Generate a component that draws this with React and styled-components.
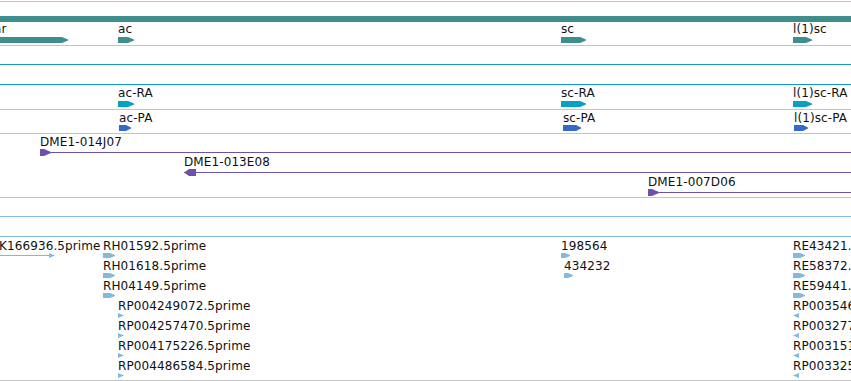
import React from "react";
import styled, { createGlobalStyle } from "styled-components";

const C = {
  grid: "#c4c4c4",
  teal: "#3f8e8e",
  cyan: "#0e9cbf",
  ra: "#05a0c2",
  pa: "#3468cd",
  purple: "#6e52a9",
  sky: "#86bde2",
  est: "#82b9e0",
  text: "#111111",
};

const GlobalStyle = createGlobalStyle`
  html, body { margin: 0; padding: 0; background: #ffffff; }
  body { font-family: "DejaVu Sans", Verdana, sans-serif; }
`;

const Browser = styled.div`
  width: 851px;
  height: 381px;
  overflow: hidden;
  padding-top: 1px;
  box-sizing: border-box;
  background: #ffffff;
`;

const TrackList = styled.div`
  display: flex;
  flex-direction: column;
  border-top: 1px solid ${C.grid};
`;

const Track = styled.div`
  position: relative;
  flex: none;
  height: ${(p) => p.$h}px;
  border-bottom: 1px solid ${(p) => p.$line};
  overflow: hidden;
`;

const SpanBar = styled.div`
  position: absolute;
  left: 0;
  right: 0;
  top: ${(p) => p.$top}px;
  height: ${(p) => p.$h}px;
  background: ${(p) => p.$color};
`;

const Feature = styled.div`
  position: absolute;
  left: ${(p) => p.$x}px;
  top: ${(p) => p.$y}px;
  display: flex;
  flex-direction: column;
  align-items: flex-start;
`;

const Label = styled.span`
  font-size: 12px;
  line-height: 14px;
  letter-spacing: 0.1px;
  color: ${C.text};
  white-space: nowrap;
`;

const Glyph = styled.svg`
  display: block;
  flex: none;
  margin-top: ${(p) => p.$gap}px;
`;

function Arrow({ w, h, color, head = 6, gap = 0 }) {
  const pts = `0,0 ${w - head},0 ${w},${h / 2 - 0.5} ${w},${h / 2 + 0.5} ${w - head},${h} 0,${h}`;
  return (
    <Glyph $gap={gap} width={w} height={h} viewBox={`0 0 ${w} ${h}`}>
      <polygon points={pts} fill={color} />
    </Glyph>
  );
}

function Tick({ dir, color, gap = 0 }) {
  const pts = dir === "left" ? "6,0 0,2.5 6,5" : "0,0 6,2.5 0,5";
  return (
    <Glyph $gap={gap} width={6} height={5} viewBox="0 0 6 5">
      <polygon points={pts} fill={color} />
    </Glyph>
  );
}

function Clone({ dir, w, color, gap = 0 }) {
  const head =
    dir === "left"
      ? "0,3.5 5,0 12,0 12,7 5,7"
      : "0,0 4,0 11,3 11,4 4,7 0,7";
  return (
    <Glyph $gap={gap} width={w} height={7} viewBox={`0 0 ${w} 7`}>
      <rect x={0} y={3} width={w} height={1} fill={color} />
      <polygon points={head} fill={color} />
    </Glyph>
  );
}

function Line({ w, color, gap = 0 }) {
  return (
    <Glyph $gap={gap} width={w} height={5} viewBox={`0 0 ${w} 5`}>
      <rect x={0} y={2} width={w - 3} height={1} fill={color} />
      <polygon points={`${w - 6},0 ${w},2.5 ${w - 6},5`} fill={color} />
    </Glyph>
  );
}

const genes = [
  { name: "ar", x: -6, w: 74 },
  { name: "ac", x: 118, w: 16 },
  { name: "sc", x: 561, w: 25 },
  { name: "l(1)sc", x: 793, w: 19 },
];

const transcriptsRA = [
  { name: "ac-RA", x: 118, w: 16 },
  { name: "sc-RA", x: 561, w: 25 },
  { name: "l(1)sc-RA", x: 793, w: 19 },
];

const transcriptsPA = [
  { name: "ac-PA", x: 119, w: 12 },
  { name: "sc-PA", x: 563, w: 18 },
  { name: "l(1)sc-PA", x: 794, w: 14 },
];

const clones = [
  { name: "DME1-014J07", x: 40, row: 0, dir: "right" },
  { name: "DME1-013E08", x: 184, row: 1, dir: "left" },
  { name: "DME1-007D06", x: 648, row: 2, dir: "right" },
];

const ests = [
  { name: "K166936.5prime", x: -1, row: 0, kind: "line", w: 56 },
  { name: "RH01592.5prime", x: 103, row: 0, kind: "arrow", w: 12 },
  { name: "198564", x: 561, row: 0, kind: "arrow", w: 9 },
  { name: "RE43421.5prime", x: 793, row: 0, kind: "arrow", w: 12 },
  { name: "RH01618.5prime", x: 103, row: 1, kind: "arrow", w: 12 },
  { name: "434232", x: 564, row: 1, kind: "arrow", w: 9 },
  { name: "RE58372.5prime", x: 793, row: 1, kind: "arrow", w: 12 },
  { name: "RH04149.5prime", x: 103, row: 2, kind: "arrow", w: 12 },
  { name: "RE59441.5prime", x: 793, row: 2, kind: "arrow", w: 12 },
  { name: "RP004249072.5prime", x: 118, row: 3, kind: "right" },
  { name: "RP003546218.5prime", x: 793, row: 3, kind: "left" },
  { name: "RP004257470.5prime", x: 118, row: 4, kind: "right" },
  { name: "RP003277615.5prime", x: 793, row: 4, kind: "left" },
  { name: "RP004175226.5prime", x: 118, row: 5, kind: "right" },
  { name: "RP003151904.5prime", x: 793, row: 5, kind: "left" },
  { name: "RP004486584.5prime", x: 118, row: 6, kind: "right" },
  { name: "RP003325781.5prime", x: 793, row: 6, kind: "left" },
];

function EstGlyph({ f }) {
  if (f.kind === "line") return <Line w={f.w} color={C.est} gap={0} />;
  if (f.kind === "arrow") return <Arrow w={f.w} h={5} head={5} color={C.est} gap={0} />;
  return <Tick dir={f.kind} color={C.est} gap={0} />;
}

export default function App() {
  return (
    <>
      <GlobalStyle />
      <Browser>
        <TrackList>
          <Track $h={43} $line={C.grid}>
            <SpanBar $top={14} $h={6} $color={C.teal} />
            {genes.map((g) => (
              <Feature key={g.name} $x={g.x} $y={20}>
                <Label>{g.name}</Label>
                <Arrow w={g.w} h={6} color={C.teal} gap={1} />
              </Feature>
            ))}
          </Track>
          <Track $h={18} $line={C.cyan} />
          <Track $h={19} $line={C.cyan} />
          <Track $h={24} $line={C.grid}>
            {transcriptsRA.map((g) => (
              <Feature key={g.name} $x={g.x} $y={1}>
                <Label>{g.name}</Label>
                <Arrow w={g.w} h={6} color={C.ra} gap={1} />
              </Feature>
            ))}
          </Track>
          <Track $h={23} $line={C.grid}>
            {transcriptsPA.map((g) => (
              <Feature key={g.name} $x={g.x} $y={1}>
                <Label>{g.name}</Label>
                <Arrow w={g.w} h={6} head={5} color={C.pa} gap={0} />
              </Feature>
            ))}
          </Track>
          <Track $h={63} $line={C.grid}>
            {clones.map((c) => (
              <Feature key={c.name} $x={c.x} $y={1 + c.row * 20}>
                <Label>{c.name}</Label>
                <Clone dir={c.dir} w={851 - c.x + 4} color={C.purple} gap={0} />
              </Feature>
            ))}
          </Track>
          <Track $h={18} $line={C.sky} />
          <Track $h={19} $line={C.sky} />
          <Track $h={143} $line={C.grid}>
            {ests.map((f) => (
              <Feature key={f.name} $x={f.x} $y={2 + f.row * 20}>
                <Label>{f.name}</Label>
                <EstGlyph f={f} />
              </Feature>
            ))}
          </Track>
        </TrackList>
      </Browser>
    </>
  );
}
